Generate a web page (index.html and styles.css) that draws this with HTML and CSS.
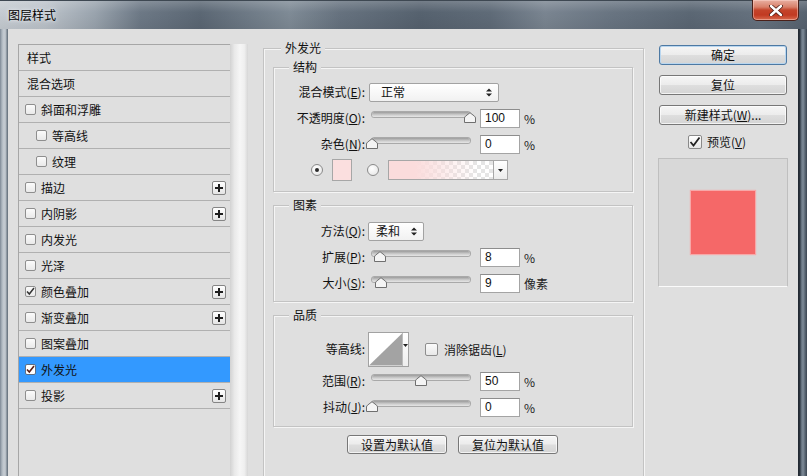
FILE: index.html
```html
<!DOCTYPE html>
<html lang="zh">
<head>
<meta charset="utf-8">
<title>图层样式</title>
<link rel="stylesheet" href="styles.css">
</head>
<body>
<div class="window">
  <div class="titlebar">
    <span class="title">图层样式</span>
    <div class="close">
      <svg width="14" height="11" viewBox="0 0 14 11"><path d="M2 1 L12 10 M12 1 L2 10" stroke="#4a1a12" stroke-width="4" stroke-linecap="round"/><path d="M2 1 L12 10 M12 1 L2 10" stroke="#ffffff" stroke-width="2.4" stroke-linecap="round"/></svg>
    </div>
  </div>
  <div class="frame">
    <div class="frame-left"></div>
    <div class="body">
      <div class="left">
        <div class="list">
          <div class="item head">样式</div>
          <div class="item head">混合选项</div>
          <div class="item"><span class="cb"></span>斜面和浮雕</div>
          <div class="item sub"><span class="cb"></span>等高线</div>
          <div class="item sub"><span class="cb"></span>纹理</div>
          <div class="item"><span class="cb"></span>描边<span class="plus"></span></div>
          <div class="item"><span class="cb"></span>内阴影<span class="plus"></span></div>
          <div class="item"><span class="cb"></span>内发光</div>
          <div class="item"><span class="cb"></span>光泽</div>
          <div class="item"><span class="cb checked"><svg width="9" height="9" viewBox="0 0 9 9"><path d="M1 4.5 L3.3 7 L8 1" fill="none" stroke="#333" stroke-width="1.5"/></svg></span>颜色叠加<span class="plus"></span></div>
          <div class="item"><span class="cb"></span>渐变叠加<span class="plus"></span></div>
          <div class="item"><span class="cb"></span>图案叠加</div>
          <div class="item selected"><span class="cb checked"><svg width="9" height="9" viewBox="0 0 9 9"><path d="M1 4.5 L3.3 7 L8 1" fill="none" stroke="#5a1e14" stroke-width="1.6"/></svg></span>外发光</div>
          <div class="item"><span class="cb"></span>投影<span class="plus"></span></div>
        </div>
        <div class="scroll"></div>
      </div>

      <div class="middle">
        <div class="group outer">
          <div class="gtitle">外发光</div>

          <div class="group inner g1">
            <div class="gtitle">结构</div>
            <div class="rows">
              <div class="row">
                <span class="lbl">混合模式(<u>E</u>):</span>
                <div class="select wide"><span>正常</span><svg class="ud" width="6" height="9" viewBox="0 0 6 9"><path d="M0 3.5 L3 0.5 L6 3.5 Z M0 5.5 L3 8.5 L6 5.5 Z" fill="#222"/></svg></div>
              </div>
              <div class="row">
                <span class="lbl">不透明度(<u>O</u>):</span>
                <div class="slider"><div class="track"></div><svg class="thumb" style="left:98px" width="12" height="11" viewBox="0 0 12 11"><path d="M0.5 10.5 V6 Q0.5 5 1.5 4.2 L6 0.7 L10.5 4.2 Q11.5 5 11.5 6 V10.5 Z" fill="#f4f4f4" stroke="#6f6f6f"/></svg></div>
                <div class="num">100</div>
                <span class="unit">%</span>
              </div>
              <div class="row">
                <span class="lbl">杂色(<u>N</u>):</span>
                <div class="slider"><div class="track"></div><svg class="thumb" style="left:0px" width="12" height="11" viewBox="0 0 12 11"><path d="M0.5 10.5 V6 Q0.5 5 1.5 4.2 L6 0.7 L10.5 4.2 Q11.5 5 11.5 6 V10.5 Z" fill="#f4f4f4" stroke="#6f6f6f"/></svg></div>
                <div class="num">0</div>
                <span class="unit">%</span>
              </div>
              <div class="row colors">
                <span class="radio on"><span class="dot"></span></span>
                <span class="swatch"></span>
                <span class="radio second"></span>
                <div class="gradient"><span class="gfill"></span><span class="gdrop"><svg width="5" height="3" viewBox="0 0 5 3"><path d="M0 0 H5 L2.5 3 Z" fill="#222"/></svg></span></div>
              </div>
            </div>
          </div>

          <div class="group inner g2">
            <div class="gtitle">图素</div>
            <div class="rows">
              <div class="row">
                <span class="lbl">方法(<u>Q</u>):</span>
                <div class="select narrow"><span>柔和</span><svg class="ud" width="6" height="9" viewBox="0 0 6 9"><path d="M0 3.5 L3 0.5 L6 3.5 Z M0 5.5 L3 8.5 L6 5.5 Z" fill="#222"/></svg></div>
              </div>
              <div class="row">
                <span class="lbl">扩展(<u>P</u>):</span>
                <div class="slider"><div class="track"></div><svg class="thumb" style="left:8px" width="12" height="11" viewBox="0 0 12 11"><path d="M0.5 10.5 V6 Q0.5 5 1.5 4.2 L6 0.7 L10.5 4.2 Q11.5 5 11.5 6 V10.5 Z" fill="#f4f4f4" stroke="#6f6f6f"/></svg></div>
                <div class="num">8</div>
                <span class="unit">%</span>
              </div>
              <div class="row">
                <span class="lbl">大小(<u>S</u>):</span>
                <div class="slider"><div class="track"></div><svg class="thumb" style="left:9px" width="12" height="11" viewBox="0 0 12 11"><path d="M0.5 10.5 V6 Q0.5 5 1.5 4.2 L6 0.7 L10.5 4.2 Q11.5 5 11.5 6 V10.5 Z" fill="#f4f4f4" stroke="#6f6f6f"/></svg></div>
                <div class="num">9</div>
                <span class="unit">像素</span>
              </div>
            </div>
          </div>

          <div class="group inner g3">
            <div class="gtitle">品质</div>
            <div class="rows">
              <div class="row tall">
                <span class="lbl">等高线:</span>
                <div class="contour">
                  <span class="curve"><svg width="34" height="33" viewBox="0 0 34 33"><path d="M0 33 L34 0 L34 33 Z" fill="#a3a3a3"/></svg></span>
                  <span class="cdrop"><svg width="5" height="3" viewBox="0 0 5 3"><path d="M0 0 H5 L2.5 3 Z" fill="#222"/></svg></span>
                </div>
                <span class="cb2"></span>
                <span class="cbl">消除锯齿(<u>L</u>)</span>
              </div>
              <div class="row">
                <span class="lbl">范围(<u>R</u>):</span>
                <div class="slider"><div class="track"></div><svg class="thumb" style="left:49px" width="12" height="11" viewBox="0 0 12 11"><path d="M0.5 10.5 V6 Q0.5 5 1.5 4.2 L6 0.7 L10.5 4.2 Q11.5 5 11.5 6 V10.5 Z" fill="#f4f4f4" stroke="#6f6f6f"/></svg></div>
                <div class="num">50</div>
                <span class="unit">%</span>
              </div>
              <div class="row">
                <span class="lbl">抖动(<u>J</u>):</span>
                <div class="slider"><div class="track"></div><svg class="thumb" style="left:0px" width="12" height="11" viewBox="0 0 12 11"><path d="M0.5 10.5 V6 Q0.5 5 1.5 4.2 L6 0.7 L10.5 4.2 Q11.5 5 11.5 6 V10.5 Z" fill="#f4f4f4" stroke="#6f6f6f"/></svg></div>
                <div class="num">0</div>
                <span class="unit">%</span>
              </div>
            </div>
          </div>

          <div class="defaults">
            <div class="btn small">设置为默认值</div>
            <div class="btn small">复位为默认值</div>
          </div>
        </div>
      </div>

      <div class="right">
        <div class="btn default">确定</div>
        <div class="btn">复位</div>
        <div class="btn">新建样式(<u>W</u>)...</div>
        <div class="preview-row">
          <span class="cbp"><svg width="12" height="12" viewBox="0 0 12 12"><path d="M1.5 6 L4.5 9.5 L10.5 1.5" fill="none" stroke="#222" stroke-width="1.8"/></svg></span>
          <span>预览(<u>V</u>)</span>
        </div>
        <div class="preview"><div class="square"></div></div>
      </div>
    </div>
    <div class="frame-right"></div>
  </div>
</div>
</body>
</html>
```

FILE: styles.css
```css
* { box-sizing: border-box; }
html, body { margin: 0; padding: 0; }
body {
  width: 807px; height: 476px; overflow: hidden;
  font-family: "Noto Sans CJK SC", "Noto Sans", sans-serif;
  font-size: 12px; color: #151515;
  background: #5f6b78;
}
u { text-decoration: underline; text-underline-offset: 1px; }

.window { width: 807px; height: 476px; display: flex; flex-direction: column; }

.titlebar {
  height: 29px; flex: none; display: flex; align-items: flex-start;
  border-top: 1px solid #3e4852;
  background:
    linear-gradient(to bottom, rgba(255,255,255,0.18), rgba(255,255,255,0) 40%, rgba(0,0,0,0.06)),
    linear-gradient(to right, #c6ccd2 0px, #bcc3ca 45px, #9aa4ae 95px, #6d7986 140px, #5b6774 200px, #6f7b87 250px, #7f8b96 290px, #66727f 340px, #56626f 420px, #5f6b78 490px, #7a8591 545px, #697582 610px, #5b6774 690px, #66727f 760px, #56626f 807px);
}
.title {
  margin: 6px 0 0 8px; line-height: 16px; font-size: 12px; color: #000;
  text-shadow: 0 0 5px #e6eaee, 0 0 3px #e6eaee;
}
.close {
  margin-left: auto; margin-right: 8px; margin-top: -1px;
  width: 47px; height: 21px;
  border: 1px solid #4a2019; border-top: none; border-radius: 0 0 5px 5px;
  background: linear-gradient(#e9b0a2 0%, #d8806a 35%, #c4442b 50%, #c13a22 75%, #d86a4e 100%);
  box-shadow: inset 0 0 0 1px rgba(255,220,210,0.45);
  display: flex; align-items: center; justify-content: center;
}

.frame { flex: 1; display: flex; min-height: 0; }
.frame-left {
  width: 8px; flex: none;
  background: linear-gradient(to right, #7d8894 0px, #aeb7c0 2px, #c7cdd3 4px, #b3bbc3 6px, #6e7984 7px, #6e7984 8px);
}
.frame-right {
  width: 9px; flex: none;
  background: linear-gradient(to right, #1f262e 0px, #2c353f 2px, #5d6a77 3px, #7f8c99 5px, #5a6673 7px, #3a4551 9px);
}
.body {
  flex: 1; display: flex; overflow: hidden;
  background: #dfdfdf;
}

/* left list */
.left { display: flex; flex: none; width: 230px; margin-left: 10px; margin-top: 15px; }
.list {
  width: 212px; flex: none;
  border-left: 1px solid #a6a6a6; border-top: 1px solid #a6a6a6;
  background: #dfdfdf;
}
.item {
  height: 26px; display: flex; align-items: center;
  border-bottom: 1px solid #b0b0b0;
  padding-left: 6px; line-height: 16px; color: #111;
}
.item.head { padding-left: 8px; }
.item.sub { padding-left: 17px; }
.item.selected { background: #3399ff; }
.cb {
  width: 11px; height: 11px; margin-right: 5px; flex: none;
  border: 1px solid #8e8e8e; border-radius: 2px;
  background: linear-gradient(#fbfbfb, #e9e9e9);
  display: flex; align-items: center; justify-content: center;
}
.item.selected .cb { background: #ffffff; border-color: #5d6f85; }
.plus {
  margin-left: auto; margin-right: 4px;
  width: 14px; height: 14px; border: 1px solid #858585; border-radius: 2px;
  background:
    linear-gradient(#1e1e1e, #1e1e1e) center / 8px 2px no-repeat,
    linear-gradient(#1e1e1e, #1e1e1e) center / 2px 8px no-repeat,
    linear-gradient(#ffffff, #e4e4e4);
}
.scroll {
  width: 18px; flex: none;
  background: linear-gradient(to right, #d2d2d2 0%, #e9e9e9 25%, #f6f6f6 55%, #efefef 80%, #d6d6d6 100%);
}

/* middle */
.middle { width: 381px; flex: none; margin-left: 15px; margin-top: 19px; }
.group {
  border: 1px solid #c3c3c3;
  box-shadow: inset 1px 1px 0 #f5f5f5, 1px 1px 0 #f5f5f5;
}
.outer { height: 520px; }
.gtitle {
  display: table; margin: -8px 0 0 17px; padding: 0 4px;
  line-height: 14px; background: #dfdfdf; color: #111;
}
.inner .gtitle { margin-left: 15px; }
.inner { margin: 12px 10px 0 9px; }
.inner.g2, .inner.g3 { margin-top: 13px; }
.g1 .rows { padding: 5px 0 8px; }
.g2 .rows { padding: 6px 0 5px; }
.g3 .rows { padding: 8px 0 6px; }

.row { height: 26px; display: flex; align-items: center; }
.row.tall { height: 38px; }
.lbl { width: 91px; flex: none; text-align: right; white-space: nowrap; color: #111; line-height: 16px; }

.select {
  height: 19px; margin-left: 4px;
  border: 1px solid #a2a2a2; border-radius: 2px;
  background: linear-gradient(#ffffff, #f1f1f1);
  display: flex; align-items: center; justify-content: space-between;
  padding: 0 6px 0 11px; line-height: 16px;
}
.select.wide { width: 130px; }
.select.narrow { width: 56px; margin-left: 3px; padding-left: 7px; }

.slider { position: relative; width: 110px; height: 12px; margin-left: 1px; margin-top: -2px; flex: none; }
.track {
  margin: 1px 6px 0;
  height: 5px; border-radius: 3px;
  background: linear-gradient(#9c9c9c, #cfcfcf 60%, #e6e6e6);
  box-shadow: 0 0 0 1px #a9a9a9;
}
.thumb { position: absolute; top: 1px; }

.num {
  width: 40px; height: 19px; margin-left: 4px; flex: none;
  border: 1px solid #a4a4a4; border-top-color: #8d8d8d;
  background: #ffffff;
  padding-left: 4px; font-family: "Liberation Sans", Arial, sans-serif; font-size: 12px; line-height: 17px; color: #111;
}
.unit { margin-left: 4px; color: #222; }

.colors .radio {
  width: 12px; height: 12px; border-radius: 50%; flex: none;
  border: 1px solid #8a8a8a;
  background: radial-gradient(circle at 40% 35%, #ffffff, #e3e3e3);
  display: flex; align-items: center; justify-content: center;
}
.radio.on { margin-left: 37px; }
.radio .dot { width: 4px; height: 4px; border-radius: 50%; background: #2b2b2b; }
.swatch {
  width: 20px; height: 22px; margin-left: 9px; flex: none;
  border: 1px solid #a7a7a7; background: #fbdfdf;
}
.radio.second { margin-left: 15px; }
.gradient {
  width: 120px; height: 20px; margin-left: 9px; flex: none;
  display: flex; border: 1px solid #a7a7a7;
}
.gfill {
  flex: 1;
  background:
    linear-gradient(to right, #fbdcdc 0%, #fbdcdc 25%, rgba(251,220,220,0) 85%),
    conic-gradient(#e5e5e5 25%, #ffffff 0 50%, #e5e5e5 0 75%, #ffffff 0) 0 0 / 8px 8px;
}
.gdrop {
  width: 14px; border-left: 1px solid #a7a7a7;
  background: linear-gradient(#ffffff, #ececec);
  display: flex; align-items: center; justify-content: center;
}

.contour {
  width: 41px; height: 35px; margin-left: 3px; flex: none;
  display: flex; border: 1px solid #a2a2a2; background: #ffffff;
}
.curve { width: 33px; display: flex; align-items: flex-end; overflow: hidden; }
.cdrop {
  flex: 1; border-left: 1px solid #bdbdbd;
  display: flex; justify-content: center; padding-top: 11px;
  background: linear-gradient(#ffffff, #efefef);
}
.cb2 {
  width: 13px; height: 13px; margin-left: 16px; flex: none;
  border: 1px solid #8e8e8e; border-radius: 2px;
  background: linear-gradient(#fbfbfb, #e8e8e8);
}
.cbl { margin-left: 6px; }

.defaults { display: flex; justify-content: center; gap: 11px; margin-top: 8px; padding-right: 2px; }

.btn {
  height: 20px; width: 128px;
  border: 1px solid #777777; border-radius: 3px;
  background: linear-gradient(#f6f6f6 0%, #ececec 48%, #dedede 52%, #d4d4d4 100%);
  box-shadow: inset 0 0 0 1px rgba(255,255,255,0.7);
  display: flex; align-items: center; justify-content: center;
  line-height: 16px; color: #111; margin-bottom: 10px;
}
.btn.small { width: 100px; height: 19px; margin-bottom: 0; }
.btn.default { border-color: #4d79a3; box-shadow: inset 0 0 0 1px #b9d6ef; }

/* right */
.right { width: 128px; flex: none; margin-left: 15px; margin-top: 16px; }
.preview-row { display: flex; align-items: center; height: 14px; padding-left: 29px; gap: 5px; line-height: 16px; }
.cbp {
  width: 14px; height: 14px; flex: none;
  border: 1px solid #8a8a8a; border-radius: 2px;
  background: linear-gradient(#ffffff, #e6e6e6);
  display: flex; align-items: center; justify-content: center;
}
.preview {
  width: 130px; height: 129px; margin: 9px 0 0 -1px;
  border: 1px solid #bfbfbf; border-bottom-color: #fbfbfb;
  background: #d8d8d8;
  display: flex; align-items: center; justify-content: center;
}
.square {
  width: 64px; height: 63px; background: #f56868;
  box-shadow: 0 0 1px 1px #f7a8a8;
}
```
